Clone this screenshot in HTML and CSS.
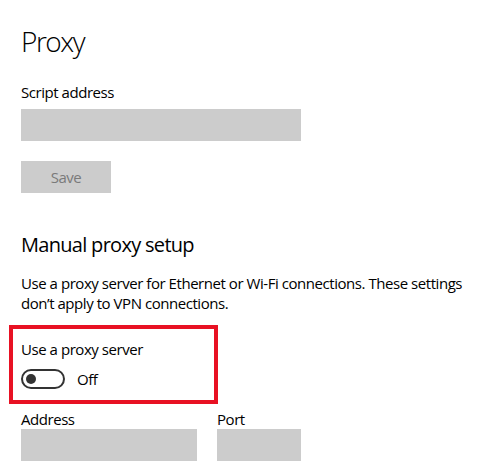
FILE: index.html
```html
<!DOCTYPE html>
<html lang="en">
<head>
    <meta charset="UTF-8" />
    <title>Proxy</title>
    <link rel="stylesheet" href="styles.css">
</head>
<body>
    <div class="page">
        <h1>Proxy</h1>

        <div class="field-label">Script address</div>
        <div class="text-box wide"></div>
        <button class="save-button" disabled>Save</button>

        <h2>Manual proxy setup</h2>
        <p class="description">Use a proxy server for Ethernet or Wi-Fi connections. These settings don’t apply to VPN connections.</p>

        <div class="highlight">
            <div class="field-label">Use a proxy server</div>
            <div class="toggle-row">
                <span class="toggle"><span class="knob"></span></span>
                <span class="toggle-text">Off</span>
            </div>
        </div>

        <div class="address-row">
            <div class="address-field">
                <div class="field-label short">Address</div>
                <div class="text-box address"></div>
            </div>
            <div class="address-field">
                <div class="field-label short">Port</div>
                <div class="text-box port"></div>
            </div>
        </div>
    </div>
</body>
</html>
```

FILE: styles.css
```css
:root {
    --text-color: #000000;
    --box-color: #cccccc;
    --muted-text: #7a7a7a;
    --toggle-color: #333333;
    --highlight-color: #e81123;
}

body {
    margin: 0;
    background: #ffffff;
    color: var(--text-color);
    font-family: "Open Sans", "Noto Sans", sans-serif;
    font-size: 15px;
    line-height: 20px;
    letter-spacing: -0.45px;
}

.page {
    padding: 21px 0 0 21px;
}

h1 {
    margin: 0;
    font-size: 28px;
    font-weight: 300;
    line-height: 40px;
    letter-spacing: -1.5px;
}

h2 {
    margin: 38px 0 0 0;
    font-size: 20px;
    font-weight: 400;
    line-height: 28px;
    letter-spacing: -0.7px;
}

.field-label {
    margin-top: 21px;
}

.text-box {
    height: 32px;
    margin-top: 7px;
    background-color: var(--box-color);
}

.text-box.wide {
    width: 280px;
}

.save-button {
    display: block;
    width: 90px;
    height: 32px;
    margin-top: 20px;
    padding: 0;
    border: none;
    background-color: var(--box-color);
    color: var(--muted-text);
    font-family: inherit;
    font-size: 15px;
    letter-spacing: inherit;
}

.description {
    width: 460px;
    margin: 14px 0 0 0;
}

.highlight {
    width: 193px;
    margin: 12px 0 0 -12px;
    padding: 10px 0 11px 8px;
    border: 4px solid var(--highlight-color);
}

.highlight .field-label {
    margin-top: 0;
}

.toggle-row {
    display: flex;
    align-items: center;
    gap: 12px;
    margin-top: 10px;
}

.toggle {
    display: flex;
    align-items: center;
    box-sizing: border-box;
    width: 44px;
    height: 20px;
    padding-left: 3px;
    border: 2px solid var(--toggle-color);
    border-radius: 10px;
}

.knob {
    width: 10px;
    height: 10px;
    border-radius: 50%;
    background-color: var(--toggle-color);
}

.address-row {
    display: flex;
    gap: 20px;
}

.field-label.short {
    margin-top: 6px;
    line-height: 19px;
}

.address-field .text-box {
    margin-top: 0;
}

.text-box.address {
    width: 176px;
}

.text-box.port {
    width: 84px;
}
```
